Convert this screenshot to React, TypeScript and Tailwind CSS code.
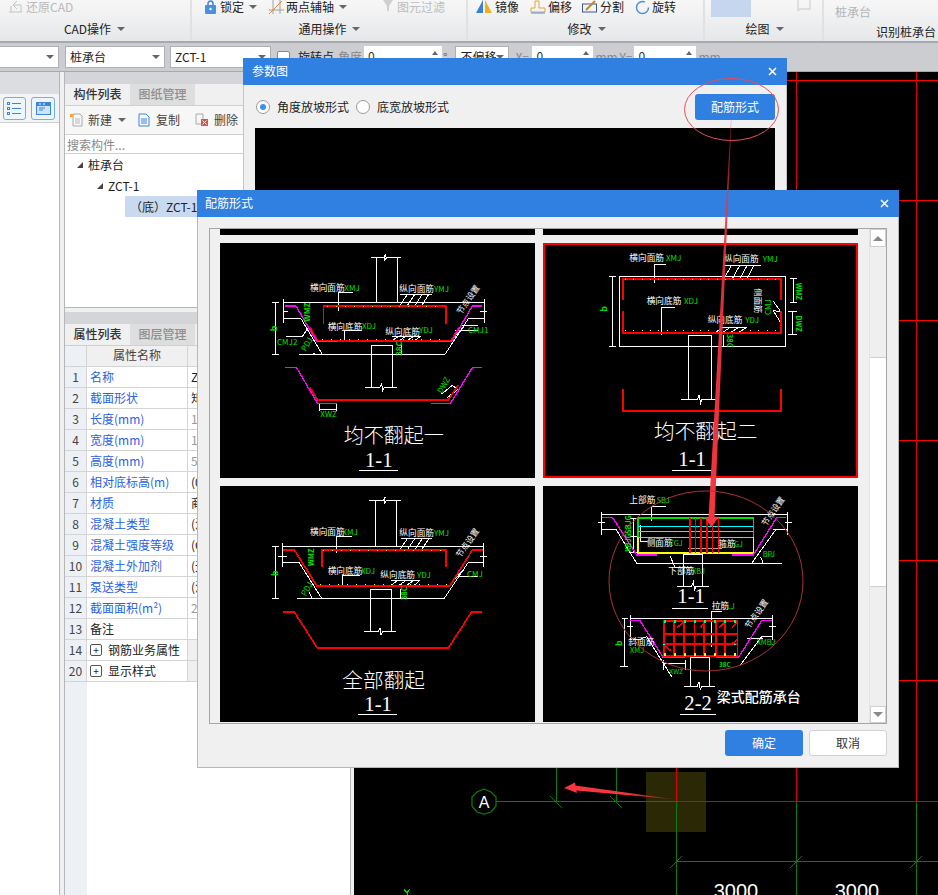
import React from "react";

const CJK = '"Noto Sans CJK SC", "Noto Sans", sans-serif';
const SERIF = '"Liberation Serif", serif';
const W = "#ffffff";
const G = "#00e000";
const R = "#ff0000";
const M = "#ff00ff";

function Lbl({ x, y, t, c = W, s = 26, r, w, f = CJK }: { x: number; y: number; t: string; c?: string; s?: number; r?: number; w?: number; f?: string }) {
  return (
    <text x={x} y={y} fill={c} fontSize={s} fontWeight={w} fontFamily={f} transform={r !== undefined ? `rotate(${r} ${x} ${y})` : undefined} style={{ shapeRendering: "auto" }}>
      {t}
    </text>
  );
}

function P({ d, c = W, w = 3, dash }: { d: string; c?: string; w?: number; dash?: string }) {
  return <path d={d} stroke={c} strokeWidth={w} fill="none" strokeDasharray={dash} />;
}

function Cad({ vb, children }: { vb: string; children: React.ReactNode }) {
  return (
    <svg viewBox={vb} preserveAspectRatio="none" className="block w-full h-full" shapeRendering="crispEdges">
      {children}
    </svg>
  );
}

function DrawA() {
  return (
    <Cad vb="15 9 945 705">
      <P d="M468 52H506L512 42L508 62L516 52H558M484 52V186M547 52V186" />
      <P d="M205 187H808M205 178V250M808 178V250M172 187H192M172 344H192M180 187V344" />
      <P d="M205 236H258L322 343M252 343H690L760 236H808M205 215H218M795 215H815" />
      <P d="M468 442V316H532V442M450 442H495L500 432L503 452L508 442H545" />
      <P d="M370 158H414M370 158V212M388 272H440M388 272V306M556 162H652M578 162L552 200M600 162L575 200M622 162L598 200M642 162L618 200" />
      <P d="M530 288H618M552 288L530 302M575 288L552 302M598 288L575 302M618 288L598 302M558 316V345M212 290H262L280 262M300 340A30 30 0 0 0 292 343" />
      <P d="M720 270H790M735 255H790M712 298L745 262M312 492V512M365 492V512M312 508H365M680 462L712 436L728 448L696 474" />
      <P d="M325 251V198H692V251" c={R} w={5} />
      <P d="M285 262L308 302H708L732 262" c={R} w={5} />
      <P d="M210 198H243L305 304H365" c={M} w={4} />
      <P d="M800 198H772L710 304H648" c={M} w={4} />
      <P d="M335 200H680M320 299H700" c="#ffff00" w={3} dash="3 24" />
      <P d="M210 383H245L308 491H365" c={M} w={4} />
      <P d="M800 383H772L706 491H648" c={M} w={4} />
      <P d="M285 443L308 480H700L730 435" c={R} w={5} />
      <Lbl x={285} y={153} t="横向面筋" /><Lbl x={388} y={153} t="XMJ" c={G} s={24} />
      <Lbl x={553} y={155} t="纵向面筋" /><Lbl x={657} y={156} t="YMJ" c={G} s={24} />
      <Lbl x={338} y={270} t="横向底筋" /><Lbl x={441} y={268} t="XDJ" c={G} s={24} />
      <Lbl x={511} y={284} t="纵向底筋" /><Lbl x={612} y={280} t="YDJ" c={G} s={24} />
      <Lbl x={286} y={245} t="WMZ" c={G} s={24} r={-90} w={700} />
      <Lbl x={186} y={274} t="b" c={G} s={26} r={-90} w={700} />
      <Lbl x={186} y={315} t="CMJ2" c={G} s={24} />
      <Lbl x={759} y={279} t="CMJ1" c={G} s={24} />
      <Lbl x={272} y={336} t="PDJ" c={G} s={24} r={-60} />
      <Lbl x={562} y={348} t="38C" c={G} s={24} r={-90} w={700} />
      <Lbl x={738} y={225} t="节点设置" s={25} r={-55} />
      <Lbl x={316} y={530} t="XWZ" c={G} s={24} />
      <Lbl x={680} y={462} t="DWZ" c={G} s={24} r={-60} />
      <Lbl x={386} y={610} t="均不翻起一" s={60} w={300} />
      <Lbl x={450} y={680} t="1-1" s={62} f={SERIF} />
      <P d="M432 691H548" />
    </Cad>
  );
}

function DrawB() {
  return (
    <Cad vb="15 15 933 693">
      <P d="M238 109H737V320H238ZM207 109H228M207 320H228M216 109V320M750 115H770M750 186H770M760 115V186M745 213H770M745 282H770M757 213V282" />
      <P d="M445 478V286H515V478M423 478H472L477 466L482 490L486 478H528" />
      <P d="M344 130V74H378M364 284V202H405M552 75H662M575 75L552 116M600 75L575 120M622 75L598 120M642 75L620 120M540 262H620M548 262L525 278M570 262L548 278M595 262L572 278M620 262L595 278M550 286V322M700 184L722 215L700 212L722 248" />
      <P d="M248 180V116H723V180M248 213V279H723V213" c={R} w={5} />
      <P d="M248 447V512H723V447" c={R} w={5} />
      <P d="M255 118H720M255 271H720" c="#ffff00" w={3} dash="3 22" />
      <Lbl x={268} y={63} t="横向面筋" /><Lbl x={378} y={63} t="XMJ" c={G} s={24} />
      <Lbl x={552} y={65} t="纵向面筋" /><Lbl x={668} y={66} t="YMJ" c={G} s={24} />
      <Lbl x={320} y={192} t="横向底筋" /><Lbl x={432} y={192} t="XDJ" c={G} s={24} />
      <Lbl x={503} y={248} t="纵向底筋" /><Lbl x={616} y={249} t="YDJ" c={G} s={24} />
      <Lbl x={202} y={215} t="b" c={G} s={26} r={-90} w={700} />
      <Lbl x={644} y={145} t="侧面筋" s={25} r={90} />
      <Lbl x={694} y={225} t="CMJ" c={G} s={24} r={-90} />
      <Lbl x={768} y={128} t="WMZ" c={G} s={22} r={90} w={700} />
      <Lbl x={768} y={226} t="DWZ" c={G} s={22} r={90} w={700} />
      <Lbl x={560} y={282} t="38C" c={G} s={22} r={90} w={700} />
      <Lbl x={342} y={598} t="均不翻起二" s={62} w={300} />
      <Lbl x={415} y={678} t="1-1" s={62} f={SERIF} />
      <P d="M396 691H517" />
    </Cad>
  );
}

function DrawC() {
  return (
    <Cad vb="15 18 945 708">
      <P d="M463 60H505L511 50L507 72L515 60H558M482 60V199M545 60V199" />
      <P d="M203 199H805M203 190V262M805 190V262M172 199H192M172 355H192M182 199V355M190 228H215M795 228H815" />
      <P d="M203 247H252L320 355M246 355H688L760 247H805" />
      <P d="M466 454V328H530V454M448 454H490L495 444L498 464L503 454H543" />
      <P d="M365 168H410M365 168V220M382 286H435M382 286V322M558 175H652M578 175L552 212M600 175L575 212M622 175L598 212M642 175L618 212M527 300H615M550 300L528 316M575 300L552 316M598 300L575 316M615 300L598 316M555 328V358M290 355A34 34 0 0 0 282 336M720 288H790M710 308L745 270" />
      <P d="M320 262V210H692V262" c={R} w={5} />
      <P d="M205 210H238L305 317H705L772 210H805" c={R} w={5} />
      <P d="M325 212H685M315 314H700" c="#ffff00" w={3} dash="3 24" />
      <P d="M205 396H238L307 504H700L770 396H800" c={R} w={5} />
      <P d="M715 300L735 265" c={M} w={2} dash="4 6" />
      <Lbl x={285} y={165} t="横向面筋" /><Lbl x={382} y={165} t="XMJ" c={G} s={24} />
      <Lbl x={553} y={167} t="纵向面筋" /><Lbl x={657} y={168} t="YMJ" c={G} s={24} />
      <Lbl x={338} y={282} t="横向底筋" /><Lbl x={438} y={282} t="XDJ" c={G} s={24} />
      <Lbl x={496} y={294} t="纵向底筋" /><Lbl x={606} y={294} t="YDJ" c={G} s={24} />
      <Lbl x={298} y={258} t="WMZ" c={G} s={22} r={-90} w={700} />
      <Lbl x={188} y={288} t="b" c={G} s={26} r={-90} w={700} />
      <Lbl x={756} y={291} t="CMJ" c={G} s={24} />
      <Lbl x={272} y={350} t="PDJ" c={G} s={24} r={-60} />
      <Lbl x={576} y={360} t="38C" c={G} s={22} r={-90} w={700} />
      <Lbl x={736} y={235} t="节点设置" s={25} r={-55} />
      <Lbl x={382} y={625} t="全部翻起" s={62} w={300} />
      <Lbl x={448} y={692} t="1-1" s={62} f={SERIF} />
      <P d="M430 703H546" />
    </Cad>
  );
}

function DrawD() {
  return (
    <Cad vb="9 18 945 708">
      <P d="M185 103H743M185 95V165M743 95V165M175 128H195M735 128H755M185 148H228M700 148H743" />
      <P d="M228 148L290 250H725M635 250L708 148M660 230A34 34 0 0 1 668 250" />
      <P d="M431 318V222H487V318M412 318H455L460 306L464 328L468 318H507" />
      <P d="M334 122V78H378M390 228L405 262H455M280 115V218M270 115H290M270 170H290M270 218H290M300 135V185H320" />
      <P d="M445 205H545M445 218H545" w={2} />
      <P d="M294 172V114H640V172" c={G} w={5} />
      <P d="M294 172V218H640V172" c="#ffff00" w={5} />
      <P d="M294 140H640M294 155H640M294 173H640" c="#00ffff" w={4} />
      <P d="M450 114V218M466 114V218M483 114V218M500 114V218M517 114V218M535 114V218" c={R} w={5} />
      <P d="M185 113H218L290 225H350" c={M} w={4} />
      <P d="M738 113H710L640 225H575" c={M} w={4} />
      <Lbl x={268} y={68} t="上部筋" /><Lbl x={350} y={68} t="SBJ" c={G} s={22} />
      <Lbl x={320} y={197} t="侧面筋" /><Lbl x={388} y={197} t="CGJ" c={G} s={22} />
      <Lbl x={535} y={201} t="箍筋" /><Lbl x={582} y={201} t="GJ" c={G} s={22} />
      <Lbl x={385} y={281} t="下部筋" /><Lbl x={456} y={281} t="XBJ" c={G} s={22} />
      <Lbl x={668} y={232} t="BPJ" c={G} s={22} />
      <Lbl x={272} y={162} t="SBJG" c={G} s={22} r={-90} w={700} />
      <Lbl x={272} y={216} t="XBJG" c={G} s={22} r={-90} w={700} />
      <Lbl x={678} y={140} t="节点设置" s={25} r={-55} />
      <Lbl x={412} y={370} t="1-1" s={62} f={SERIF} />
      <P d="M396 384H505" />
      <P d="M270 415H697M270 405V480M697 405V480M260 438H280M688 438H708M245 415H265M240 560H265M252 415V560" />
      <P d="M270 478H300L320 470L395 590M670 475H620M600 556L665 470H697" />
      <P d="M370 550H435M370 540V570M435 540V570M514 395V500M514 395H545" />
      <P d="M451 618V533H508V618M432 618H472L477 606L481 630L485 618H525" />
      <P d="M372 422H592V527H372ZM402 422V527M432 422V527M463 422V527M492 422V527M527 422V527M555 422V527M372 462H592M372 492H592" c={R} w={5} />
      <P d="M412 442L432 426M482 442L496 426M538 442L556 426M576 442L592 426M372 495L392 512M592 478L576 492" c={R} w={5} />
      <P d="M270 422H300L370 533H435" c={M} w={4} />
      <P d="M695 422H665L595 533H527" c={M} w={4} />
      <P d="M373 424H590" c="#00ff60" w={8} dash="5 25" />
      <P d="M373 523H590" c="#ffff00" w={8} dash="5 25" />
      <P d="M373 464V466M586 464V466M373 492V494M586 492V494" c="#00ffff" w={6} />
      <Lbl x={515} y={388} t="拉筋" /><Lbl x={560} y={388} t="LJ" c={G} s={22} />
      <Lbl x={265} y={495} t="斜面筋" />
      <Lbl x={270} y={518} t="XMJ" c={G} s={22} />
      <Lbl x={650} y={496} t="XMBJ" c={G} s={22} />
      <Lbl x={388} y={582} t="XWZ" c={G} s={20} />
      <Lbl x={538} y={562} t="38C" c={G} s={18} w={700} />
      <Lbl x={246} y={497} t="b" c={G} s={24} r={-90} w={700} />
      <Lbl x={628} y={448} t="节点设置" s={25} r={-55} />
      <Lbl x={433} y={690} t="2-2" s={62} f={SERIF} />
      <P d="M420 703H527" />
      <Lbl x={530} y={665} t="梁式配筋承台" s={42} w={500} />
    </Cad>
  );
}

function Caret({ className = "" }: { className?: string }) {
  return <span className={`inline-block w-0 h-0 border-x-[4px] border-x-transparent border-t-[4px] border-t-[#666] ${className}`} />;
}

function Sel({ w, text, className = "" }: { w: string; text?: string; className?: string }) {
  return (
    <div className={`h-[22px] bg-white border border-[#aeb0b3] flex items-center justify-between pl-1 pr-1 text-[12px] text-[#222] whitespace-nowrap shrink-0 ${w} ${className}`}>
      <span>{text}</span>
      <Caret />
    </div>
  );
}

function Spin({ w }: { w: string }) {
  return (
    <div className={`h-[22px] bg-white flex items-start justify-between pl-1 pr-1 pt-[1px] text-[12px] text-[#333] shrink-0 ${w}`}>
      <span>0</span>
      <span className="inline-block mt-[4px] w-0 h-0 border-x-[3px] border-x-transparent border-b-[4px] border-b-[#666]" />
    </div>
  );
}

function Ribbon() {
  const sep = "border-r-2 border-r-[#dfe1e3]";
  return (
    <div className="h-[43px] flex bg-gradient-to-b from-[#f7f7f7] to-[#e5e7e9] border-b-2 border-b-[#a6a9ad] text-[12px] text-[#222] overflow-hidden shrink-0">
      <div className={`w-[192px] ${sep} flex flex-col`}>
        <div className="h-[14px] flex items-center pl-[8px] text-[#b9b9b9]">
          <svg width="16" height="14" viewBox="0 0 16 14" fill="none" stroke="#c4c4c4" className="mr-[2px]"><path d="M1 12H14M3 12V6M9 1L5 5L9 9M5 5H13V12" /></svg>
          <span>还原CAD</span>
        </div>
        <div className="mt-[9px] h-3 flex items-center justify-center gap-[6px] pr-[1px]">
          <span>CAD操作</span><Caret />
        </div>
      </div>
      <div className={`w-[276px] ${sep} flex flex-col`}>
        <div className="h-[14px] flex items-center pl-[13px]">
          <svg width="11" height="14" viewBox="0 0 11 14" className="mr-[4px]"><path d="M3 6V3.5A2.5 2.5 0 0 1 8 3.5V6" stroke="#3d85de" strokeWidth="1.5" fill="none" /><rect x="0" y="5" width="11" height="9" rx="1" fill="#4a90e2" /><circle cx="5.5" cy="9" r="1.2" fill="#fff" /></svg>
          <span>锁定</span><Caret className="ml-[5px]" />
          <svg width="17" height="16" viewBox="0 0 17 16" className="ml-[11px] mr-[1px]" fill="none"><path d="M1 11H16M5 1V15M12 1V15" stroke="#9aa3ad" /><path d="M1 15L14 2" stroke="#e0813a" /></svg>
          <span>两点辅轴</span><Caret className="ml-[5px]" />
          <svg width="13" height="14" viewBox="0 0 13 14" className="ml-[36px] mr-[1px]" fill="#cfcfcf"><path d="M0 0H10L6 6V12L4 10V6Z" /></svg>
          <span className="text-[#bdbdbd]">图元过滤</span>
        </div>
        <div className="mt-[9px] h-3 flex items-center justify-center gap-[5px]">
          <span>通用操作</span><Caret />
        </div>
      </div>
      <div className={`w-[237px] ${sep} flex flex-col`}>
        <div className="h-[14px] flex items-center pl-[8px]">
          <svg width="16" height="14" viewBox="0 0 16 14" className="mr-[3px]"><path d="M7 0V13L0 13Z" fill="#3d7fd0" /><path d="M9 0V13L16 13Z" fill="#f2b01e" /></svg>
          <span>镜像</span>
          <svg width="16" height="14" viewBox="0 0 16 14" fill="none" className="ml-[11px] mr-[2px]"><path d="M5 1H9V8H15V12H1V8H5Z" stroke="#e9a23a" /><path d="M1 13H15" stroke="#4a90e2" /></svg>
          <span>偏移</span>
          <svg width="16" height="14" viewBox="0 0 16 14" fill="none" className="ml-[10px] mr-[2px]"><rect x="0.5" y="4" width="14" height="8" stroke="#3a5a9c" /><path d="M4 10L13 1" stroke="#b88a3a" strokeWidth="2" /></svg>
          <span>分割</span>
          <svg width="15" height="15" viewBox="0 0 15 15" fill="none" className="ml-[11px] mr-[2px]"><circle cx="7.5" cy="7.5" r="6" stroke="#4a90e2" strokeWidth="1.5" strokeDasharray="30 8" /></svg>
          <span>旋转</span>
        </div>
        <div className="mt-[9px] h-3 flex items-center justify-center gap-[6px] pl-[2px]">
          <span>修改</span><Caret />
        </div>
      </div>
      <div className={`w-[119px] ${sep} flex flex-col`}>
        <div className="h-[17px] flex items-start pl-[6px]">
          <div className="w-[40px] h-[17px] bg-[#c5d6ee]" />
          <svg width="16" height="11" viewBox="0 0 16 11" fill="none" className="ml-[46px]"><path d="M1 0V9H13V0" stroke="#c8c8c8" /><rect x="0" y="8" width="3" height="3" fill="#ddd" /></svg>
        </div>
        <div className="mt-[6px] h-3 flex items-center justify-center gap-[6px] pl-[2px]">
          <span>绘图</span><Caret />
        </div>
      </div>
      <div className="flex-1 flex flex-col">
        <div className="h-[12px] mt-[6px] flex items-center pl-[11px] text-[#b4b4b4]">桩承台</div>
        <div className="mt-[8px] h-3 flex items-center pl-[52px] whitespace-nowrap">识别桩承台</div>
      </div>
    </div>
  );
}

function OptionBar() {
  return (
    <div className="h-[29px] flex items-center bg-[#cbcdd1] border-b border-b-[#a6a9ad] text-[12px] text-[#555] shrink-0">
      <Sel w="w-[59px]" className="border-l-0" />
      <Sel w="w-[100px]" text="桩承台" className="ml-[6px]" />
      <Sel w="w-[101px]" text="ZCT-1" className="ml-[5px]" />
      <span className="ml-[6px] w-[13px] h-[13px] bg-white border border-[#888] rounded-[2px]" />
      <span className="ml-[8px] text-[#222]">旋转点</span>
      <span className="ml-[4px] text-[#888] w-[24px] whitespace-nowrap">角度</span>
      <span className="ml-[0px] w-[2px]" />
      <Spin w="w-[78px]" />
      <span className="ml-[1px]">°</span>
      <Sel w="w-[54px]" text="不偏移" className="ml-[8px]" />
      <span className="ml-[6px] w-[17px] text-[#888]">X=</span>
      <Spin w="w-[61px]" />
      <span className="ml-[2px] w-[23px] text-[#888]">mm</span>
      <span className="ml-[1px] w-[15px] text-[#888]">Y=</span>
      <Spin w="w-[62px]" />
      <span className="ml-[2px] text-[#888]">mm</span>
    </div>
  );
}

function Tabs({ a, b }: { a: string; b: string }) {
  return (
    <>
      <div className="h-[12px] bg-[#d3d5d9] shrink-0" />
      <div className="h-[22px] flex bg-[#f0f0f0] border-b border-b-[#d0d0d0] text-[12px] shrink-0">
        <div className="w-[65px] pb-[2px] flex items-center justify-center font-medium text-[#333]">{a}</div>
        <div className="w-[65px] pb-[2px] flex items-center justify-center bg-[#dedede] text-[#8e8e8e] font-medium">{b}</div>
      </div>
    </>
  );
}

function TreeRow({ pad, text, sel }: { pad: string; text: string; sel?: boolean }) {
  return (
    <div className={`h-[21px] flex items-center whitespace-nowrap ${pad}`}>
      {!sel && <span className="mr-[5px] w-0 h-0 border-l-[6px] border-l-transparent border-b-[6px] border-b-[#444]" />}
      <span className={sel ? "bg-[#c9d9f0] h-[21px] flex items-center pl-[5px] w-[200px]" : ""}>{text}</span>
    </div>
  );
}

function Panel() {
  const rows: [string, string, string, string][] = [
    ["1", "名称", "ZCT-1", "b"],
    ["2", "截面形状", "矩形", "b"],
    ["3", "长度(mm)", "1000", "g"],
    ["4", "宽度(mm)", "1000", "g"],
    ["5", "高度(mm)", "500", "g"],
    ["6", "相对底标高(m)", "(0)", "b"],
    ["7", "材质", "商品混凝土", "b"],
    ["8", "混凝土类型", "(混凝土)", "b"],
    ["9", "混凝土强度等级", "(C30)", "b"],
    ["10", "混凝土外加剂", "(无)", "b"],
    ["11", "泵送类型", "(混凝土泵)", "b"],
    ["12", "截面面积(m²)", "2.25", "g"],
    ["13", "备注", "", "k"],
  ];
  return (
    <div className="w-[287px] flex flex-col border-x border-x-[#b4b6ba] text-[12px] text-[#333] shrink-0">
      <div className="h-[236px] flex flex-col border-b border-b-[#b4b6ba] bg-white shrink-0">
        <Tabs a="构件列表" b="图纸管理" />
        <div className="h-[29px] flex items-center bg-[#f7f7f7] border-b border-b-[#cfcfcf] pl-[4px] shrink-0 text-[#444]">
          <svg width="14" height="14" viewBox="0 0 14 14" fill="none" className="mr-[5px]"><path d="M4 1H11L13 3V13H4Z" stroke="#aaa" /><path d="M6 6H11M6 8H11M6 10H11" stroke="#bbb" /><rect x="1" y="1" width="3" height="3" fill="#f4a23a" /></svg>
          <span>新建</span><Caret className="ml-[6px] mr-[12px]" />
          <svg width="12" height="14" viewBox="0 0 12 14" fill="none" className="mr-[6px]"><path d="M1 1H8L11 4V13H1Z" stroke="#3d85de" /><path d="M3 6H9M3 8H9M3 10H9" stroke="#3d85de" /></svg>
          <span>复制</span>
          <svg width="14" height="14" viewBox="0 0 14 14" fill="none" className="ml-[15px] mr-[5px]"><path d="M1 1H8V11H1Z" stroke="#aaa" /><rect x="6" y="6" width="7" height="7" fill="#e05050" /><path d="M7.5 7.5L11.5 11.5M11.5 7.5L7.5 11.5" stroke="#fff" /></svg>
          <span>删除</span>
        </div>
        <div className="h-[19px] flex items-center pl-[2px] pt-[2px] border-b border-b-[#cfcfcf] text-[#888] shrink-0">搜索构件...</div>
        <div className="flex-1 bg-white text-[#222]">
          <TreeRow pad="pl-[12px]" text="桩承台" />
          <TreeRow pad="pl-[32px]" text="ZCT-1" />
          <TreeRow pad="pl-[60px]" text="（底）ZCT-1" sel />
        </div>
      </div>
      <div className="h-[4px] bg-[#f0f0f0] shrink-0" />
      <div className="flex-1 flex flex-col bg-white">
        <Tabs a="属性列表" b="图层管理" />
        <div className="h-[21px] flex border-b border-b-[#d4d4d4] bg-[#f0f0f0] shrink-0 text-[#444]">
          <div className="w-[22px] bg-[#edf0f4] border-r border-r-[#d4d4d4]" />
          <div className="w-[101px] pb-[2px] flex items-center justify-center border-r border-r-[#d4d4d4]">属性名称</div>
          <div className="flex-1" />
        </div>
        {rows.map(([n, name, val, k]) => (
          <div key={n} className="h-[21px] flex border-b border-b-[#d4d4d4] shrink-0">
            <div className="w-[22px] bg-[#edf0f4] border-r border-r-[#d4d4d4] flex items-center justify-center text-[#444]">{n}</div>
            <div className={`w-[101px] flex items-center pl-[3px] border-r border-r-[#d4d4d4] whitespace-nowrap ${k === "k" ? "text-[#222]" : "text-[#2b62e3]"}`}>{name}</div>
            <div className={`flex-1 flex items-center pl-[3px] whitespace-nowrap ${k === "g" ? "text-[#999]" : "text-[#222]"}`}>{val}</div>
          </div>
        ))}
        {[["14", "钢筋业务属性"], ["20", "显示样式"]].map(([n, name]) => (
          <div key={n} className="h-[21px] flex border-b border-b-[#d4d4d4] shrink-0">
            <div className="w-[22px] bg-[#edf0f4] border-r border-r-[#d4d4d4] flex items-center justify-center text-[#444]">{n}</div>
            <div className="w-[101px] flex items-center pl-[3px] border-r border-r-[#d4d4d4] text-[#222] whitespace-nowrap">
              <span className="w-[12px] h-[12px] border border-[#555] rounded-[2px] flex items-center justify-center text-[10px] leading-none mr-[6px]">+</span>
              {name}
            </div>
            <div className="flex-1 bg-[#f0f0f0]" />
          </div>
        ))}
        <div className="flex-1 flex">
          <div className="w-[22px] bg-[#edf0f4]" />
          <div className="flex-1" />
        </div>
      </div>
    </div>
  );
}

function Left() {
  return (
    <div className="w-[60px] flex flex-col bg-white border-r border-r-[#b4b6ba] shrink-0">
      <div className="h-[22px] bg-[#dcdde0] shrink-0" />
      <div className="h-[29px] flex items-center gap-[5px] pl-[3px] bg-[#f4f4f4] border-b border-b-[#cfcfcf] shrink-0">
        <div className="w-[23px] h-[23px] border border-[#6fb0ea] rounded-[3px] bg-[#eef6fd] flex items-center justify-center">
          <svg width="15" height="13" viewBox="0 0 15 13" fill="none" stroke="#3d85de"><rect x="0.5" y="0.5" width="2" height="2" /><rect x="0.5" y="5.5" width="2" height="2" /><rect x="0.5" y="10.5" width="2" height="2" /><path d="M5 1.5H14M5 6.5H14M5 11.5H14" /></svg>
        </div>
        <div className="w-[24px] h-[23px] border border-[#6fb0ea] rounded-[3px] bg-[#eef6fd] flex items-center justify-center">
          <svg width="15" height="13" viewBox="0 0 15 13"><rect width="15" height="13" fill="#3d85de" /><rect x="1" y="4" width="13" height="8" fill="#cfe3f8" /><rect x="3" y="1.5" width="2" height="1" fill="#fff" /><rect x="7" y="1.5" width="2" height="1" fill="#fff" /><path d="M3 6H9M3 8H7" stroke="#3d85de" /></svg>
        </div>
      </div>
    </div>
  );
}

function CanvasArt() {
  const greenV = [556, 616];
  return (
    <svg viewBox="354 72 584 823" preserveAspectRatio="none" className="block w-full h-full" shapeRendering="crispEdges">
      <rect x={646} y={772} width={60} height={60} fill="#2b2806" />
      <path d="M354 80H938M354 200H938M354 320H938M354 440H938M354 560H938M354 680H938" stroke="#f00" />
      <path d="M796.5 72V801M916.5 72V801M676.5 72V801M676 801.5H938" stroke="#e00000" />
      <path d="M496 801.5H676M676.5 801V895M796.5 801V895M916.5 801V895M676 861.5H938M556.5 768V801M616.5 768V801" stroke="#0a7a0a" />
      {greenV.map((x) => <path key={x} d={`M${x - 6} 796L${x + 6} 808`} stroke="#0a7a0a" />)}
      {[676, 796, 916].map((x) => <path key={x} d={`M${x - 6} 868L${x + 6} 856`} stroke="#0a7a0a" />)}
      <polygon points="484,789 491,792 496,797 496,806 491,812 484,814 477,812 472,806 472,797 477,792" fill="none" stroke="#0a7a0a" strokeWidth="1.3" shapeRendering="auto" />
      <text x={484} y={808} fill="#fff" fontSize="16" textAnchor="middle" fontFamily='"Liberation Sans", sans-serif' style={{ shapeRendering: "auto" }}>A</text>
      <text x={736} y={898} fill="#fff" fontSize="20" textAnchor="middle" fontFamily='"Liberation Sans", sans-serif' style={{ shapeRendering: "auto" }}>3000</text>
      <text x={857} y={898} fill="#fff" fontSize="20" textAnchor="middle" fontFamily='"Liberation Sans", sans-serif' style={{ shapeRendering: "auto" }}>3000</text>
      <path d="M404 889L407 893L410 889M407 893V895" stroke="#00e000" />
    </svg>
  );
}

function CloseX() {
  return (
    <svg width="9" height="9" viewBox="0 0 9 9" fill="none" stroke="#fff" strokeWidth="1.5"><path d="M1 1L8 8M8 1L1 8" /></svg>
  );
}

function Dlg1() {
  return (
    <div className="absolute left-[243px] top-[58px] w-[544px] h-[400px] bg-[#f0f0f0] flex flex-col border-x border-x-[#c4c4c4] text-[12px]">
      <div className="h-[27px] bg-[#2f80e0] flex items-center justify-between pl-[9px] pr-[10px] text-white -mx-[1px] shrink-0">
        <span className="pb-[2px]">参数图</span>
        <CloseX />
      </div>
      <div className="h-[43px] flex items-center pl-[12px] pr-[11px] shrink-0 text-[#222]">
        <span className="w-[14px] h-[14px] rounded-full border border-[#999] bg-white flex items-center justify-center"><span className="w-[6px] h-[6px] rounded-full bg-[#3a8ff0]" /></span>
        <span className="ml-[7px]">角度放坡形式</span>
        <span className="ml-[7px] w-[14px] h-[14px] rounded-full border border-[#999] bg-white" />
        <span className="ml-[7px]">底宽放坡形式</span>
        <button className="ml-auto w-[80px] h-[26px] mt-[1px] bg-[#2f80e0] text-white rounded-[3px]">配筋形式</button>
      </div>
      <div className="flex-1 mx-[11px] bg-black" />
    </div>
  );
}

function Dlg2() {
  return (
    <div className="absolute left-[197px] top-[190px] w-[702px] h-[578px] bg-[#f0f0f0] flex flex-col border-x border-b border-[#b8b8b8] text-[12px]">
      <div className="h-[27px] bg-[#2f80e0] flex items-center justify-between pl-[8px] pr-[10px] text-white -mx-[1px] shrink-0">
        <span className="pb-[1px]">配筋形式</span>
        <CloseX />
      </div>
      <div className="mt-[11px] mx-[11px] h-[496px] bg-white border border-[#a5a5a5] flex shrink-0">
        <div className="w-[659px] bg-[#f0f0f0] pl-[10px] overflow-hidden shrink-0">
          <div className="grid grid-cols-[315px_315px] gap-x-[8px] gap-y-[8px] -mt-[1px]">
            <div className="h-[7px] bg-black" />
            <div className="h-[7px] bg-black" />
            <div className="h-[235px] bg-black"><DrawA /></div>
            <div className="h-[235px] bg-black border-2 border-[#ff0000]"><DrawB /></div>
            <div className="h-[236px] bg-black"><DrawC /></div>
            <div className="h-[236px] bg-black"><DrawD /></div>
          </div>
        </div>
        <div className="flex-1 flex flex-col bg-[#efefef] border-l border-l-[#e4e4e4]">
          <div className="h-[18px] bg-white border border-[#d0d0d0] flex items-center justify-center shrink-0">
            <span className="w-0 h-0 border-x-[5px] border-x-transparent border-b-[5px] border-b-[#888]" />
          </div>
          <div className="h-[110px] shrink-0" />
          <div className="h-[230px] bg-white border-y border-y-[#cfcfcf] shrink-0" />
          <div className="flex-1" />
          <div className="h-[17px] bg-white border border-[#d0d0d0] flex items-center justify-center shrink-0">
            <span className="w-0 h-0 border-x-[5px] border-x-transparent border-t-[5px] border-t-[#888]" />
          </div>
        </div>
      </div>
      <div className="flex justify-end gap-[6px] mt-[6px] pr-[11px]">
        <button className="w-[78px] h-[26px] bg-[#2f80e0] text-white rounded-[3px]">确定</button>
        <button className="w-[78px] h-[26px] bg-white border border-[#cfd3d8] text-[#333] rounded-[3px]">取消</button>
      </div>
    </div>
  );
}

function Marks() {
  return (
    <svg viewBox="0 0 938 895" className="absolute inset-0 w-[938px] h-[895px] pointer-events-none">
      <defs>
        <linearGradient id="shaft" x1="0" y1="118" x2="0" y2="525" gradientUnits="userSpaceOnUse">
          <stop offset="0" stopColor="#ee3a48" stopOpacity="0.35" />
          <stop offset="0.25" stopColor="#e8343f" stopOpacity="0.9" />
          <stop offset="1" stopColor="#f6353f" />
        </linearGradient>
        <linearGradient id="small" x1="676" y1="0" x2="580" y2="0" gradientUnits="userSpaceOnUse">
          <stop offset="0" stopColor="#f6353f" stopOpacity="0.2" />
          <stop offset="0.5" stopColor="#f6353f" />
        </linearGradient>
      </defs>
      <ellipse cx="731.5" cy="109.5" rx="47" ry="31" fill="none" stroke="#e4505a" strokeWidth="1" />
      <polygon points="731,118 731.6,118 714.5,518 708.5,518" fill="url(#shaft)" />
      <polygon points="704,517 718,518 711.5,527" fill="#f6353f" />
      <ellipse cx="706" cy="581" rx="97" ry="90" fill="none" stroke="#a83238" strokeWidth="1" />
      <polygon points="676,799.5 575,785.5 576,790.5" fill="url(#small)" />
      <polygon points="564,788 575,782.5 577,793" fill="#f6353f" />
    </svg>
  );
}

export default function App() {
  return (
    <div className="relative w-[938px] h-[895px] overflow-hidden flex flex-col bg-[#f0f0f0]" style={{ fontFamily: CJK }}>
      <Ribbon />
      <OptionBar />
      <div className="flex-1 flex min-h-0">
        <Left />
        <div className="w-[4px] shrink-0" />
        <Panel />
        <div className="w-[3px] shrink-0" />
        <div className="flex-1 bg-black min-w-0"><CanvasArt /></div>
      </div>
      <Dlg1 />
      <Dlg2 />
      <Marks />
    </div>
  );
}
